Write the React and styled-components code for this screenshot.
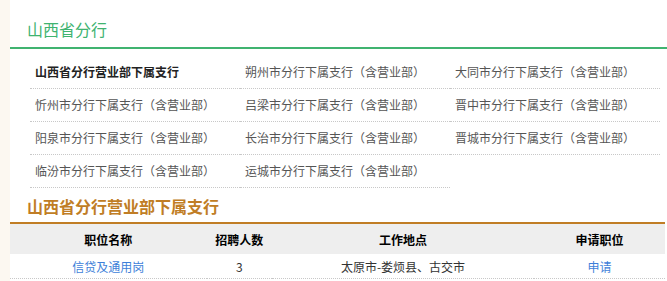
import { createGlobalStyle, styled } from "styled-components";

const GlobalStyle = createGlobalStyle`
  body {
    margin: 0;
    background: #fcf8f1;
    font-family: "Noto Sans CJK SC", "Noto Sans", sans-serif;
  }
`;

const Page = styled.div`
  margin-left: 10px;
  width: 657px;
  height: 281px;
  background: #fff;
  overflow: hidden;
`;

const Header = styled.div`
  height: 49px;
  box-sizing: border-box;
  display: flex;
  align-items: flex-end;
  padding: 0 0 8px 17px;
  border-bottom: 2px solid ${(p) => p.$color};
  color: ${(p) => p.$color};
  font-size: 16px;
  line-height: 20px;
  font-weight: ${(p) => (p.$bold ? 700 : 400)};
`;

const SubHeader = styled(Header)`
  height: 36px;
  width: 655px;
  padding-bottom: 6px;
`;

const List = styled.ul`
  list-style: none;
  margin: 7px 0 0 20px;
  padding: 0;
  display: grid;
  grid-template-columns: repeat(3, 210px);
`;

const ListItem = styled.li`
  height: 32px;
  line-height: 32px;
  padding-left: 5px;
  border-bottom: 1px dotted #c8c8c8;
  font-size: 12px;
  color: ${(p) => (p.$active ? "#222" : "#555")};
  font-weight: ${(p) => (p.$active ? 700 : 400)};
  white-space: nowrap;
`;

const Table = styled.table`
  width: 655px;
  border-collapse: collapse;
  table-layout: fixed;
  font-size: 12px;
`;

const Th = styled.th`
  height: 30px;
  padding: 0;
  background: #eeeeee;
  color: #000;
  font-weight: 700;
  text-align: center;
  width: ${(p) => p.$w};
`;

const Td = styled.td`
  height: 24px;
  padding: 0;
  text-align: center;
  color: ${(p) => (p.$link ? "#3e7fd9" : "#333")};
  border-bottom: 1px dotted #c8c8c8;
`;

const branches = [
  "山西省分行营业部下属支行",
  "朔州市分行下属支行（含营业部）",
  "大同市分行下属支行（含营业部）",
  "忻州市分行下属支行（含营业部）",
  "吕梁市分行下属支行（含营业部）",
  "晋中市分行下属支行（含营业部）",
  "阳泉市分行下属支行（含营业部）",
  "长治市分行下属支行（含营业部）",
  "晋城市分行下属支行（含营业部）",
  "临汾市分行下属支行（含营业部）",
  "运城市分行下属支行（含营业部）",
];

export default function App() {
  return (
    <>
      <GlobalStyle />
      <Page>
        <Header $color="#40b370">山西省分行</Header>
        <List>
          {branches.map((name, i) => (
            <ListItem key={name} $active={i === 0}>
              {name}
            </ListItem>
          ))}
        </List>
        <SubHeader $color="#c07d25" $bold>
          山西省分行营业部下属支行
        </SubHeader>
        <Table>
          <thead>
            <tr>
              <Th $w="30%">职位名称</Th>
              <Th $w="10%">招聘人数</Th>
              <Th $w="40%">工作地点</Th>
              <Th $w="20%">申请职位</Th>
            </tr>
          </thead>
          <tbody>
            <tr>
              <Td $link>信贷及通用岗</Td>
              <Td>3</Td>
              <Td>太原市-娄烦县、古交市</Td>
              <Td $link>申请</Td>
            </tr>
          </tbody>
        </Table>
      </Page>
    </>
  );
}
